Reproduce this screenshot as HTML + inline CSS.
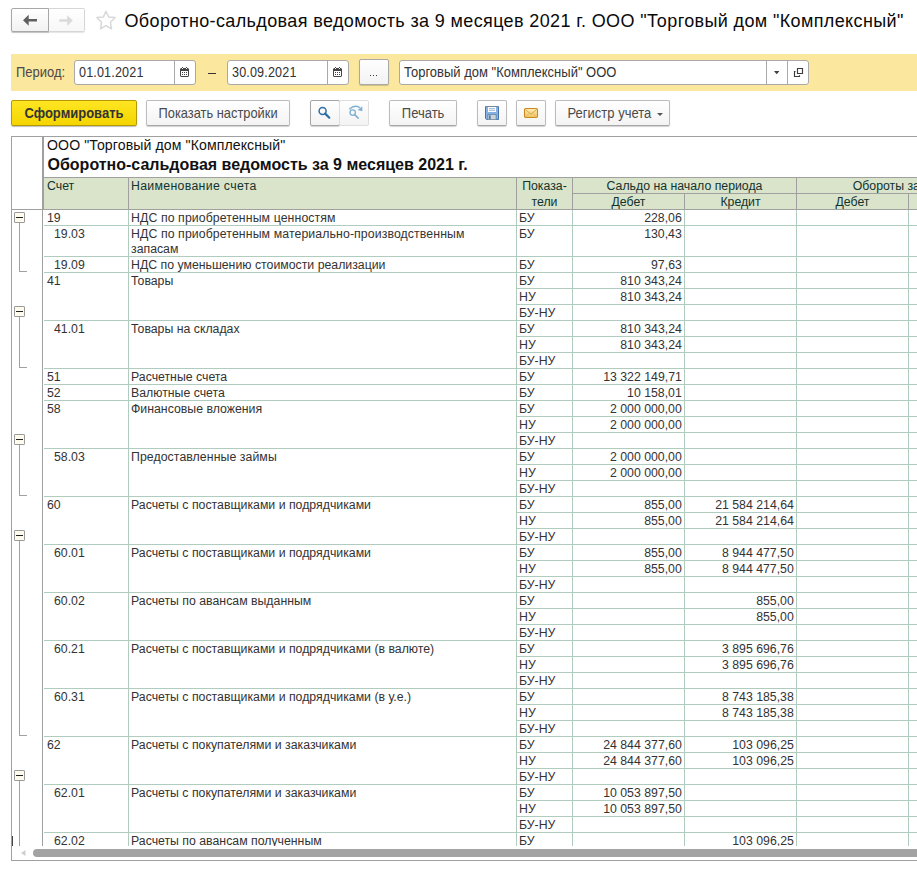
<!DOCTYPE html><html><head><meta charset="utf-8"><style>
*{box-sizing:border-box;margin:0;padding:0}
html,body{width:917px;height:871px;overflow:hidden;background:#fff}
body{position:relative;font-family:"Liberation Sans",sans-serif;color:#222}
.a{position:absolute;white-space:nowrap}
.t{position:absolute;white-space:nowrap;font-size:12.3px;line-height:15px;color:#333}
.h{position:absolute;white-space:nowrap;font-size:12.3px;line-height:15px;color:#12332f}
.hl{position:absolute;height:1px}
.vl{position:absolute;width:1px}
.btn{position:absolute;border:1px solid #bcbcbc;border-bottom-color:#a6a6a6;border-radius:2px;background:linear-gradient(#ffffff,#f3f3f3);box-shadow:0 1px 1px rgba(0,0,0,0.18)}
.inp{position:absolute;border:1px solid #a9a9a9;border-radius:3px;background:#fff}
</style></head><body><div class="a" style="left:11px;top:8px;width:38px;height:24px;border:1px solid #a8a8a8;border-radius:2px 0 0 2px;background:linear-gradient(#fff,#f2f2f2);box-shadow:0 1px 1px rgba(0,0,0,.25)"></div>
<div class="a" style="left:49px;top:8px;width:36px;height:24px;border:1px solid #d6d6d6;border-left:none;border-radius:0 2px 2px 0;background:linear-gradient(#fff,#f7f7f7);box-shadow:0 1px 1px rgba(0,0,0,.10)"></div>
<svg class="a" style="left:20px;top:12px" width="20" height="16" viewBox="0 0 20 16"><path d="M3 8.2 L8.7 2.7 L8.7 6.9 L17 6.9 L17 9.6 L8.7 9.6 L8.7 13.7 Z" fill="#606060"/></svg>
<svg class="a" style="left:56px;top:12px" width="20" height="16" viewBox="0 0 20 16"><path d="M16.8 8.5 L11.2 3.2 L11.2 7.2 L3.3 7.2 L3.3 9.8 L11.2 9.8 L11.2 13.9 Z" fill="#dadada"/></svg>
<svg class="a" style="left:92px;top:6px" width="30" height="28" viewBox="0 0 30 28"><path d="M14 5.2 L16.7 11.1 L23.2 11.5 L18.4 16.2 L19.5 22.9 L14 19.7 L8.5 22.9 L9.6 16.2 L4.8 11.5 L11.3 11.1 Z" fill="none" stroke="#d9d9d9" stroke-width="1.5" stroke-linejoin="round"/></svg>
<div class="a" style="left:124.5px;top:9.95px;font-size:18px;line-height:22px;color:#0a0a0a;letter-spacing:0.37px;transform:scaleY(1.060);transform-origin:0 16.95px;">Оборотно-сальдовая ведомость за 9 месяцев 2021 г. ООО "Торговый дом "Комплексный"</div>
<div class="a" style="left:11px;top:54px;width:906px;height:37px;background:#fbe79d"></div>
<div class="a" style="left:16px;top:64.70px;font-size:13px;line-height:16px;color:#4a4a4a;transform:scaleY(1.070);transform-origin:0 12.30px;">Период:</div>
<div class="inp" style="left:74px;top:60px;width:122px;height:25px"></div>
<div class="vl" style="left:174px;top:61px;height:23px;background:#a9a9a9"></div>
<div class="a" style="left:79.0px;top:64.84px;font-size:12.6px;line-height:16px;color:#333;letter-spacing:0.15px;transform:scaleY(1.120);transform-origin:0 12.16px;">01.01.2021</div>
<svg class="a" style="left:180px;top:67px;shape-rendering:crispEdges" width="9" height="10" viewBox="0 0 9 10"><rect x="0" y="1" width="9" height="9" fill="#454545"/><rect x="1" y="4" width="7" height="5" fill="#fff"/><g fill="#454545"><rect x="2" y="5" width="1" height="1"/><rect x="4" y="5" width="1" height="1"/><rect x="6" y="5" width="1" height="1"/><rect x="2" y="7" width="1" height="1"/><rect x="4" y="7" width="1" height="1"/><rect x="6" y="7" width="1" height="1"/><rect x="2" y="0" width="1" height="1"/><rect x="6" y="0" width="1" height="1"/></g><rect x="2" y="1" width="1" height="1" fill="#fff"/><rect x="6" y="1" width="1" height="1" fill="#fff"/><rect x="0" y="1" width="1" height="1" fill="#aaa"/><rect x="8" y="1" width="1" height="1" fill="#aaa"/><rect x="0" y="9" width="1" height="1" fill="#aaa"/><rect x="8" y="9" width="1" height="1" fill="#aaa"/></svg>
<div class="a" style="left:208px;top:73px;width:8px;height:1px;background:#333"></div>
<div class="inp" style="left:227px;top:60px;width:122px;height:25px"></div>
<div class="vl" style="left:327px;top:61px;height:23px;background:#a9a9a9"></div>
<div class="a" style="left:232.0px;top:64.84px;font-size:12.6px;line-height:16px;color:#333;letter-spacing:0.15px;transform:scaleY(1.120);transform-origin:0 12.16px;">30.09.2021</div>
<svg class="a" style="left:333px;top:67px;shape-rendering:crispEdges" width="9" height="10" viewBox="0 0 9 10"><rect x="0" y="1" width="9" height="9" fill="#454545"/><rect x="1" y="4" width="7" height="5" fill="#fff"/><g fill="#454545"><rect x="2" y="5" width="1" height="1"/><rect x="4" y="5" width="1" height="1"/><rect x="6" y="5" width="1" height="1"/><rect x="2" y="7" width="1" height="1"/><rect x="4" y="7" width="1" height="1"/><rect x="6" y="7" width="1" height="1"/><rect x="2" y="0" width="1" height="1"/><rect x="6" y="0" width="1" height="1"/></g><rect x="2" y="1" width="1" height="1" fill="#fff"/><rect x="6" y="1" width="1" height="1" fill="#fff"/><rect x="0" y="1" width="1" height="1" fill="#aaa"/><rect x="8" y="1" width="1" height="1" fill="#aaa"/><rect x="0" y="9" width="1" height="1" fill="#aaa"/><rect x="8" y="9" width="1" height="1" fill="#aaa"/></svg>
<div class="btn" style="left:359px;top:59px;width:30px;height:26px;border-color:#a8a8a8"></div>
<svg class="a" style="left:369px;top:74px;shape-rendering:crispEdges" width="10" height="3" viewBox="0 0 10 3"><rect x="1" y="1" width="1.3" height="1.3" fill="#3a3a3a"/><rect x="4" y="1" width="1.3" height="1.3" fill="#3a3a3a"/><rect x="7" y="1" width="1.3" height="1.3" fill="#3a3a3a"/></svg>
<div class="inp" style="left:399px;top:60px;width:410px;height:25px"></div>
<div class="vl" style="left:766px;top:61px;height:23px;background:#a9a9a9"></div>
<div class="vl" style="left:787px;top:61px;height:23px;background:#a9a9a9"></div>
<div class="a" style="left:404px;top:64.70px;font-size:13px;line-height:16px;color:#333;transform:scaleY(1.070);transform-origin:0 12.30px;">Торговый дом "Комплексный" ООО</div>
<svg class="a" style="left:773px;top:70px" width="8" height="6" viewBox="0 0 8 6"><path d="M1 1 L6.4 1 L3.7 4.3 Z" fill="#404040"/></svg>
<svg class="a" style="left:790px;top:64px" width="18" height="18" viewBox="0 0 18 18"><path d="M7.5 4.5 H12.5 V9.5 H7.5 Z" fill="none" stroke="#3c3c3c" stroke-width="1.15"/><path d="M5.5 7.5 H4.5 V12.5 H9.5 V11.3" fill="none" stroke="#3c3c3c" stroke-width="1.15"/></svg>
<div class="a" style="left:11px;top:100px;width:126px;height:26px;border:1px solid #b49a00;border-radius:2px;background:linear-gradient(#ffe622,#f4d500);box-shadow:0 1px 1px rgba(0,0,0,.25)"></div>
<div class="a" style="left:24.5px;top:106.00px;font-size:13px;line-height:16px;font-weight:bold;color:#333;transform:scaleY(1.070);transform-origin:0 12.30px;">Сформировать</div>
<div class="btn" style="left:146px;top:100px;width:144px;height:26px"></div>
<div class="a" style="left:158.6px;top:106.05px;font-size:12.85px;line-height:16px;color:#4a4a4a;transform:scaleY(1.070);transform-origin:0 12.25px;">Показать настройки</div>
<div class="btn" style="left:310px;top:100px;width:30px;height:26px;border-color:#a5a5a5"></div>
<div class="btn" style="left:339px;top:100px;width:30px;height:26px;border-color:#dedede;box-shadow:none"></div>
<svg class="a" style="left:308px;top:98px" width="64" height="30" viewBox="0 0 64 30"><circle cx="14.6" cy="13" r="3.5" fill="none" stroke="#2d6ea5" stroke-width="1.5"/><path d="M17.2 15.6 L21.3 19.7" stroke="#2d6ea5" stroke-width="2.2" stroke-linecap="round"/><circle cx="44.7" cy="14.6" r="2.7" fill="none" stroke="#7fb0d3" stroke-width="1.3"/><path d="M46.7 16.6 L50.2 20.1" stroke="#7fb0d3" stroke-width="1.5" stroke-linecap="round"/><path d="M41.2 11.3 Q46.5 6.3 51.8 9.6" fill="none" stroke="#7fb0d3" stroke-width="1.3"/><path d="M54.3 8.3 L54.3 13.2 L49.6 12 Z" fill="#7fb0d3"/></svg>
<div class="btn" style="left:389px;top:100px;width:68px;height:26px"></div>
<div class="a" style="left:401.8px;top:106.00px;font-size:13.00px;line-height:16px;color:#4a4a4a;transform:scaleY(1.070);transform-origin:0 12.30px;">Печать</div>
<div class="btn" style="left:477px;top:100px;width:30px;height:26px"></div>
<div class="btn" style="left:516px;top:100px;width:30px;height:26px"></div>
<svg class="a" style="left:485px;top:106px" width="14" height="14" viewBox="0 0 14 14"><path d="M0.5 0.5 H13.5 V13.5 H1.5 L0.5 12.5 Z" fill="#86b0e0" stroke="#4a74ad" stroke-width="1"/><rect x="3" y="1" width="8" height="5" fill="#fbfdff"/><path d="M1 0.5 H13" stroke="#7a8a96" stroke-width="0.8"/><path d="M4 2.6 H10 M4 4.3 H10" stroke="#86a6cc" stroke-width="0.8"/><rect x="2.5" y="8" width="9" height="6" fill="#5a82b8"/><rect x="3.3" y="8.8" width="7.4" height="4.7" fill="#cdd5d2"/><rect x="4" y="9.3" width="1.7" height="4.2" fill="#4f7dbb"/><path d="M2.5 13.5 H11.5" stroke="#7f8f99" stroke-width="0.7"/></svg>
<svg class="a" style="left:523px;top:107px" width="16" height="12" viewBox="0 0 16 12"><defs><linearGradient id="mg" x1="0" y1="0" x2="0" y2="1"><stop offset="0" stop-color="#fdeeb4"/><stop offset="1" stop-color="#efc25e"/></linearGradient></defs><rect x="1.5" y="1.5" width="13" height="9" rx="1.2" fill="url(#mg)" stroke="#c98a22" stroke-width="1.1"/><path d="M2.3 2.4 L8 7.2 L13.7 2.4" fill="none" stroke="#d39c48" stroke-width="0.9"/><path d="M2.3 10 L6.3 6.3 M13.7 10 L9.7 6.3" stroke="#dfb36a" stroke-width="0.7"/></svg>
<div class="btn" style="left:555px;top:100px;width:115px;height:26px"></div>
<div class="a" style="left:567.5px;top:106.00px;font-size:13.00px;line-height:16px;color:#4a4a4a;transform:scaleY(1.070);transform-origin:0 12.30px;">Регистр учета</div>
<svg class="a" style="left:656px;top:112px" width="8" height="5" viewBox="0 0 8 5"><path d="M1 1 L7 1 L4 4 Z" fill="#555"/></svg>
<div class="a" style="left:11px;top:136px;width:920px;height:725px;border:1px solid #a0a0a0;border-right:none"></div>
<div class="a" style="left:12px;top:137px;width:905px;height:709px;overflow:hidden">
<div class="a" style="left:35.00px;top:0.14px;font-size:14.1px;line-height:16px;color:#111;letter-spacing:0.1px">ООО "Торговый дом "Комплексный"</div>
<div class="a" style="left:35.50px;top:18.71px;font-size:16px;line-height:18px;font-weight:bold;color:#111">Оборотно-сальдовая ведомость за 9 месяцев 2021 г.</div>
<div class="a" style="left:31px;top:40px;width:874px;height:32px;background:#d9e4cb"></div>
<div class="hl" style="left:31px;top:40px;width:875px;background:#a0a0a0"></div>
<div class="hl" style="left:-1px;top:72px;width:907px;background:#a0a0a0"></div>
<div class="hl" style="left:561px;top:56px;width:345px;background:#a0a0a0"></div>
<div class="vl" style="left:30px;top:-1px;height:711px;background:#a0a0a0"></div>
<div class="vl" style="left:31px;top:-1px;height:73px;background:#a0a0a0"></div>
<div class="vl" style="left:116px;top:40px;height:33px;background:#a0a0a0"></div>
<div class="vl" style="left:504px;top:40px;height:33px;background:#a0a0a0"></div>
<div class="vl" style="left:560px;top:40px;height:33px;background:#a0a0a0"></div>
<div class="vl" style="left:784px;top:40px;height:33px;background:#a0a0a0"></div>
<div class="vl" style="left:672px;top:56px;height:17px;background:#a0a0a0"></div>
<div class="vl" style="left:896px;top:56px;height:17px;background:#a0a0a0"></div>
<div class="h" style="left:35.00px;top:42.43px;">Счет</div>
<div class="h" style="left:119.00px;top:42.43px;letter-spacing:0.32px">Наименование счета</div>
<div class="h" style="left:505px;width:55px;text-align:center;top:42.43px">Показа-</div>
<div class="h" style="left:505px;width:55px;text-align:center;top:58.43px">тели</div>
<div class="h" style="left:561px;width:223px;text-align:center;top:42.43px">Сальдо на начало периода</div>
<div class="h" style="left:561px;width:111px;text-align:center;top:58.43px">Дебет</div>
<div class="h" style="left:673px;width:111px;text-align:center;top:58.43px">Кредит</div>
<div class="h" style="left:785px;width:223px;text-align:center;top:42.43px">Обороты за период</div>
<div class="h" style="left:785px;width:111px;text-align:center;top:58.43px">Дебет</div>
<div class="h" style="left:897px;width:111px;text-align:center;top:58.43px">Кредит</div>
<div class="t" style="left:35.00px;top:74.43px;">19</div>
<div class="t" style="left:119.00px;top:74.43px;letter-spacing:0.10px">НДС по приобретенным ценностям</div>
<div class="t" style="left:507.00px;top:74.43px;">БУ</div>
<div class="t" style="right:235.20px;top:74.43px">228,06</div>
<div class="hl" style="left:505px;top:88px;width:401px;background:#b0ccbe"></div>
<div class="hl" style="left:32px;top:88px;width:473px;background:#b0ccbe"></div>
<div class="t" style="left:42.00px;top:90.43px;">19.03</div>
<div class="t" style="left:119.00px;top:90.43px;letter-spacing:0.10px">НДС по приобретенным материально-производственным</div>
<div class="t" style="left:119.00px;top:105.43px;">запасам</div>
<div class="t" style="left:507.00px;top:90.43px;">БУ</div>
<div class="t" style="right:235.20px;top:90.43px">130,43</div>
<div class="hl" style="left:505px;top:119px;width:401px;background:#b0ccbe"></div>
<div class="hl" style="left:32px;top:119px;width:473px;background:#b0ccbe"></div>
<div class="t" style="left:42.00px;top:121.43px;">19.09</div>
<div class="t" style="left:119.00px;top:121.43px;">НДС по уменьшению стоимости реализации</div>
<div class="t" style="left:507.00px;top:121.43px;">БУ</div>
<div class="t" style="right:235.20px;top:121.43px">97,63</div>
<div class="hl" style="left:505px;top:135px;width:401px;background:#b0ccbe"></div>
<div class="hl" style="left:32px;top:135px;width:473px;background:#b0ccbe"></div>
<div class="t" style="left:35.00px;top:137.43px;">41</div>
<div class="t" style="left:119.00px;top:137.43px;">Товары</div>
<div class="t" style="left:507.00px;top:137.43px;">БУ</div>
<div class="t" style="right:235.20px;top:137.43px">810 343,24</div>
<div class="hl" style="left:505px;top:151px;width:401px;background:#b0ccbe"></div>
<div class="t" style="left:507.00px;top:153.43px;">НУ</div>
<div class="t" style="right:235.20px;top:153.43px">810 343,24</div>
<div class="hl" style="left:505px;top:167px;width:401px;background:#b0ccbe"></div>
<div class="t" style="left:507.00px;top:169.43px;">БУ-НУ</div>
<div class="hl" style="left:505px;top:183px;width:401px;background:#b0ccbe"></div>
<div class="hl" style="left:32px;top:183px;width:473px;background:#b0ccbe"></div>
<div class="t" style="left:42.00px;top:185.43px;">41.01</div>
<div class="t" style="left:119.00px;top:185.43px;">Товары на складах</div>
<div class="t" style="left:507.00px;top:185.43px;">БУ</div>
<div class="t" style="right:235.20px;top:185.43px">810 343,24</div>
<div class="hl" style="left:505px;top:199px;width:401px;background:#b0ccbe"></div>
<div class="t" style="left:507.00px;top:201.43px;">НУ</div>
<div class="t" style="right:235.20px;top:201.43px">810 343,24</div>
<div class="hl" style="left:505px;top:215px;width:401px;background:#b0ccbe"></div>
<div class="t" style="left:507.00px;top:217.43px;">БУ-НУ</div>
<div class="hl" style="left:505px;top:231px;width:401px;background:#b0ccbe"></div>
<div class="hl" style="left:32px;top:231px;width:473px;background:#b0ccbe"></div>
<div class="t" style="left:35.00px;top:233.43px;">51</div>
<div class="t" style="left:119.00px;top:233.43px;">Расчетные счета</div>
<div class="t" style="left:507.00px;top:233.43px;">БУ</div>
<div class="t" style="right:235.20px;top:233.43px">13 322 149,71</div>
<div class="hl" style="left:505px;top:247px;width:401px;background:#b0ccbe"></div>
<div class="hl" style="left:32px;top:247px;width:473px;background:#b0ccbe"></div>
<div class="t" style="left:35.00px;top:249.43px;">52</div>
<div class="t" style="left:119.00px;top:249.43px;">Валютные счета</div>
<div class="t" style="left:507.00px;top:249.43px;">БУ</div>
<div class="t" style="right:235.20px;top:249.43px">10 158,01</div>
<div class="hl" style="left:505px;top:263px;width:401px;background:#b0ccbe"></div>
<div class="hl" style="left:32px;top:263px;width:473px;background:#b0ccbe"></div>
<div class="t" style="left:35.00px;top:265.43px;">58</div>
<div class="t" style="left:119.00px;top:265.43px;">Финансовые вложения</div>
<div class="t" style="left:507.00px;top:265.43px;">БУ</div>
<div class="t" style="right:235.20px;top:265.43px">2 000 000,00</div>
<div class="hl" style="left:505px;top:279px;width:401px;background:#b0ccbe"></div>
<div class="t" style="left:507.00px;top:281.43px;">НУ</div>
<div class="t" style="right:235.20px;top:281.43px">2 000 000,00</div>
<div class="hl" style="left:505px;top:295px;width:401px;background:#b0ccbe"></div>
<div class="t" style="left:507.00px;top:297.43px;">БУ-НУ</div>
<div class="hl" style="left:505px;top:311px;width:401px;background:#b0ccbe"></div>
<div class="hl" style="left:32px;top:311px;width:473px;background:#b0ccbe"></div>
<div class="t" style="left:42.00px;top:313.43px;">58.03</div>
<div class="t" style="left:119.00px;top:313.43px;letter-spacing:0.07px">Предоставленные займы</div>
<div class="t" style="left:507.00px;top:313.43px;">БУ</div>
<div class="t" style="right:235.20px;top:313.43px">2 000 000,00</div>
<div class="hl" style="left:505px;top:327px;width:401px;background:#b0ccbe"></div>
<div class="t" style="left:507.00px;top:329.43px;">НУ</div>
<div class="t" style="right:235.20px;top:329.43px">2 000 000,00</div>
<div class="hl" style="left:505px;top:343px;width:401px;background:#b0ccbe"></div>
<div class="t" style="left:507.00px;top:345.43px;">БУ-НУ</div>
<div class="hl" style="left:505px;top:359px;width:401px;background:#b0ccbe"></div>
<div class="hl" style="left:32px;top:359px;width:473px;background:#b0ccbe"></div>
<div class="t" style="left:35.00px;top:361.43px;">60</div>
<div class="t" style="left:119.00px;top:361.43px;">Расчеты с поставщиками и подрядчиками</div>
<div class="t" style="left:507.00px;top:361.43px;">БУ</div>
<div class="t" style="right:235.20px;top:361.43px">855,00</div>
<div class="t" style="right:123.20px;top:361.43px">21 584 214,64</div>
<div class="hl" style="left:505px;top:375px;width:401px;background:#b0ccbe"></div>
<div class="t" style="left:507.00px;top:377.43px;">НУ</div>
<div class="t" style="right:235.20px;top:377.43px">855,00</div>
<div class="t" style="right:123.20px;top:377.43px">21 584 214,64</div>
<div class="hl" style="left:505px;top:391px;width:401px;background:#b0ccbe"></div>
<div class="t" style="left:507.00px;top:393.43px;">БУ-НУ</div>
<div class="hl" style="left:505px;top:407px;width:401px;background:#b0ccbe"></div>
<div class="hl" style="left:32px;top:407px;width:473px;background:#b0ccbe"></div>
<div class="t" style="left:42.00px;top:409.43px;">60.01</div>
<div class="t" style="left:119.00px;top:409.43px;">Расчеты с поставщиками и подрядчиками</div>
<div class="t" style="left:507.00px;top:409.43px;">БУ</div>
<div class="t" style="right:235.20px;top:409.43px">855,00</div>
<div class="t" style="right:123.20px;top:409.43px">8 944 477,50</div>
<div class="hl" style="left:505px;top:423px;width:401px;background:#b0ccbe"></div>
<div class="t" style="left:507.00px;top:425.43px;">НУ</div>
<div class="t" style="right:235.20px;top:425.43px">855,00</div>
<div class="t" style="right:123.20px;top:425.43px">8 944 477,50</div>
<div class="hl" style="left:505px;top:439px;width:401px;background:#b0ccbe"></div>
<div class="t" style="left:507.00px;top:441.43px;">БУ-НУ</div>
<div class="hl" style="left:505px;top:455px;width:401px;background:#b0ccbe"></div>
<div class="hl" style="left:32px;top:455px;width:473px;background:#b0ccbe"></div>
<div class="t" style="left:42.00px;top:457.43px;">60.02</div>
<div class="t" style="left:119.00px;top:457.43px;">Расчеты по авансам выданным</div>
<div class="t" style="left:507.00px;top:457.43px;">БУ</div>
<div class="t" style="right:123.20px;top:457.43px">855,00</div>
<div class="hl" style="left:505px;top:471px;width:401px;background:#b0ccbe"></div>
<div class="t" style="left:507.00px;top:473.43px;">НУ</div>
<div class="t" style="right:123.20px;top:473.43px">855,00</div>
<div class="hl" style="left:505px;top:487px;width:401px;background:#b0ccbe"></div>
<div class="t" style="left:507.00px;top:489.43px;">БУ-НУ</div>
<div class="hl" style="left:505px;top:503px;width:401px;background:#b0ccbe"></div>
<div class="hl" style="left:32px;top:503px;width:473px;background:#b0ccbe"></div>
<div class="t" style="left:42.00px;top:505.43px;">60.21</div>
<div class="t" style="left:119.00px;top:505.43px;">Расчеты с поставщиками и подрядчиками (в валюте)</div>
<div class="t" style="left:507.00px;top:505.43px;">БУ</div>
<div class="t" style="right:123.20px;top:505.43px">3 895 696,76</div>
<div class="hl" style="left:505px;top:519px;width:401px;background:#b0ccbe"></div>
<div class="t" style="left:507.00px;top:521.43px;">НУ</div>
<div class="t" style="right:123.20px;top:521.43px">3 895 696,76</div>
<div class="hl" style="left:505px;top:535px;width:401px;background:#b0ccbe"></div>
<div class="t" style="left:507.00px;top:537.43px;">БУ-НУ</div>
<div class="hl" style="left:505px;top:551px;width:401px;background:#b0ccbe"></div>
<div class="hl" style="left:32px;top:551px;width:473px;background:#b0ccbe"></div>
<div class="t" style="left:42.00px;top:553.43px;">60.31</div>
<div class="t" style="left:119.00px;top:553.43px;">Расчеты с поставщиками и подрядчиками (в у.е.)</div>
<div class="t" style="left:507.00px;top:553.43px;">БУ</div>
<div class="t" style="right:123.20px;top:553.43px">8 743 185,38</div>
<div class="hl" style="left:505px;top:567px;width:401px;background:#b0ccbe"></div>
<div class="t" style="left:507.00px;top:569.43px;">НУ</div>
<div class="t" style="right:123.20px;top:569.43px">8 743 185,38</div>
<div class="hl" style="left:505px;top:583px;width:401px;background:#b0ccbe"></div>
<div class="t" style="left:507.00px;top:585.43px;">БУ-НУ</div>
<div class="hl" style="left:505px;top:599px;width:401px;background:#b0ccbe"></div>
<div class="hl" style="left:32px;top:599px;width:473px;background:#b0ccbe"></div>
<div class="t" style="left:35.00px;top:601.43px;">62</div>
<div class="t" style="left:119.00px;top:601.43px;">Расчеты с покупателями и заказчиками</div>
<div class="t" style="left:507.00px;top:601.43px;">БУ</div>
<div class="t" style="right:235.20px;top:601.43px">24 844 377,60</div>
<div class="t" style="right:123.20px;top:601.43px">103 096,25</div>
<div class="hl" style="left:505px;top:615px;width:401px;background:#b0ccbe"></div>
<div class="t" style="left:507.00px;top:617.43px;">НУ</div>
<div class="t" style="right:235.20px;top:617.43px">24 844 377,60</div>
<div class="t" style="right:123.20px;top:617.43px">103 096,25</div>
<div class="hl" style="left:505px;top:631px;width:401px;background:#b0ccbe"></div>
<div class="t" style="left:507.00px;top:633.43px;">БУ-НУ</div>
<div class="hl" style="left:505px;top:647px;width:401px;background:#b0ccbe"></div>
<div class="hl" style="left:32px;top:647px;width:473px;background:#b0ccbe"></div>
<div class="t" style="left:42.00px;top:649.43px;">62.01</div>
<div class="t" style="left:119.00px;top:649.43px;">Расчеты с покупателями и заказчиками</div>
<div class="t" style="left:507.00px;top:649.43px;">БУ</div>
<div class="t" style="right:235.20px;top:649.43px">10 053 897,50</div>
<div class="hl" style="left:505px;top:663px;width:401px;background:#b0ccbe"></div>
<div class="t" style="left:507.00px;top:665.43px;">НУ</div>
<div class="t" style="right:235.20px;top:665.43px">10 053 897,50</div>
<div class="hl" style="left:505px;top:679px;width:401px;background:#b0ccbe"></div>
<div class="t" style="left:507.00px;top:681.43px;">БУ-НУ</div>
<div class="hl" style="left:505px;top:695px;width:401px;background:#b0ccbe"></div>
<div class="hl" style="left:32px;top:695px;width:473px;background:#b0ccbe"></div>
<div class="t" style="left:42.00px;top:697.43px;">62.02</div>
<div class="t" style="left:119.00px;top:697.43px;">Расчеты по авансам полученным</div>
<div class="t" style="left:507.00px;top:697.43px;">БУ</div>
<div class="t" style="right:123.20px;top:697.43px">103 096,25</div>
<div class="hl" style="left:505px;top:711px;width:401px;background:#b0ccbe"></div>
<div class="t" style="left:507.00px;top:713.43px;">НУ</div>
<div class="hl" style="left:505px;top:727px;width:401px;background:#b0ccbe"></div>
<div class="t" style="left:507.00px;top:729.43px;">БУ-НУ</div>
<div class="hl" style="left:505px;top:743px;width:401px;background:#b0ccbe"></div>
<div class="hl" style="left:32px;top:743px;width:473px;background:#b0ccbe"></div>
<div class="vl" style="left:116px;top:73px;height:637px;background:#b0ccbe"></div>
<div class="vl" style="left:504px;top:73px;height:637px;background:#b0ccbe"></div>
<div class="vl" style="left:560px;top:73px;height:637px;background:#b0ccbe"></div>
<div class="vl" style="left:672px;top:73px;height:637px;background:#b0ccbe"></div>
<div class="vl" style="left:784px;top:73px;height:637px;background:#b0ccbe"></div>
<div class="vl" style="left:896px;top:73px;height:637px;background:#b0ccbe"></div>
<div class="a" style="left:2px;top:75px;width:11px;height:11px;border:1px solid #9a9a9a;border-radius:1px;background:#fffcee"></div>
<div class="a" style="left:4px;top:80px;width:7px;height:1px;background:#222"></div>
<div class="vl" style="left:7px;top:86px;height:49px;background:#a0a0a0"></div>
<div class="hl" style="left:7px;top:134px;width:8px;background:#a0a0a0"></div>
<div class="a" style="left:2px;top:169px;width:11px;height:11px;border:1px solid #9a9a9a;border-radius:1px;background:#fffcee"></div>
<div class="a" style="left:4px;top:174px;width:7px;height:1px;background:#222"></div>
<div class="vl" style="left:7px;top:180px;height:51px;background:#a0a0a0"></div>
<div class="hl" style="left:7px;top:230px;width:8px;background:#a0a0a0"></div>
<div class="a" style="left:2px;top:297px;width:11px;height:11px;border:1px solid #9a9a9a;border-radius:1px;background:#fffcee"></div>
<div class="a" style="left:4px;top:302px;width:7px;height:1px;background:#222"></div>
<div class="vl" style="left:7px;top:308px;height:51px;background:#a0a0a0"></div>
<div class="hl" style="left:7px;top:358px;width:8px;background:#a0a0a0"></div>
<div class="a" style="left:2px;top:393px;width:11px;height:11px;border:1px solid #9a9a9a;border-radius:1px;background:#fffcee"></div>
<div class="a" style="left:4px;top:398px;width:7px;height:1px;background:#222"></div>
<div class="vl" style="left:7px;top:404px;height:195px;background:#a0a0a0"></div>
<div class="hl" style="left:7px;top:598px;width:8px;background:#a0a0a0"></div>
<div class="a" style="left:2px;top:633px;width:11px;height:11px;border:1px solid #9a9a9a;border-radius:1px;background:#fffcee"></div>
<div class="a" style="left:4px;top:638px;width:7px;height:1px;background:#222"></div>
<div class="vl" style="left:7px;top:644px;height:66px;background:#a0a0a0"></div>
</div>
<div class="a" style="left:12px;top:836px;width:1px;height:10px;background:#444"></div>
<div class="a" style="left:33px;top:849px;width:900px;height:8px;border-radius:4px;background:#a3a3a3"></div>
<svg class="a" style="left:20px;top:849px" width="6" height="8" viewBox="0 0 6 8"><path d="M5.5 1 L1 4 L5.5 7 Z" fill="#cfcfcf"/></svg></body></html>
